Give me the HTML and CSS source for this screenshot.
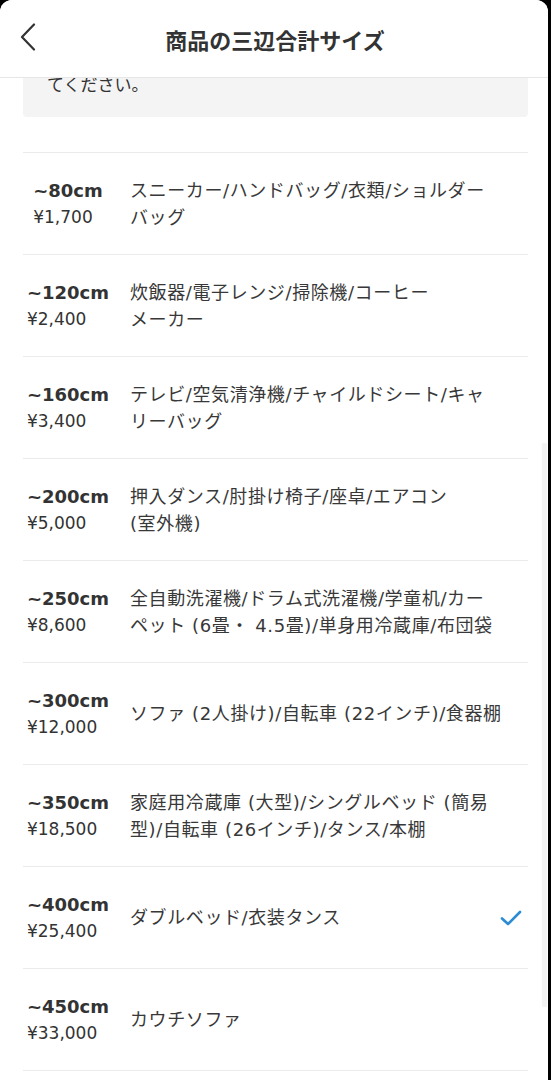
FILE: index.html
```
<!DOCTYPE html>
<html lang="ja">
<head>
<meta charset="UTF-8">
<title>商品の三辺合計サイズ</title>
<link rel="stylesheet" href="styles.css">
</head>
<body>
<div class="sheet">
  <header class="topbar">
    <a class="back" href="#">
      <svg width="16" height="28" viewBox="0 0 16 28"><polyline points="14,1.5 2,14 14,26.5" fill="none" stroke="#333" stroke-width="2.2" stroke-linecap="round" stroke-linejoin="round"/></svg>
    </a>
    <h1>商品の三辺合計サイズ</h1>
  </header>

  <div class="content">
    <div class="note"><p>てください。</p></div>

    <ul class="sizes">
      <li class="size">
        <div class="size-head"><div><b>~80cm</b><span>¥1,700</span></div></div>
        <p class="size-items">スニーカー/ハンドバッグ/衣類/ショルダー<br>バッグ</p>
      </li>
      <li class="size">
        <div class="size-head"><div><b>~120cm</b><span>¥2,400</span></div></div>
        <p class="size-items">炊飯器/電子レンジ/掃除機/コーヒー<br>メーカー</p>
      </li>
      <li class="size">
        <div class="size-head"><div><b>~160cm</b><span>¥3,400</span></div></div>
        <p class="size-items">テレビ/空気清浄機/チャイルドシート/キャ<br>リーバッグ</p>
      </li>
      <li class="size">
        <div class="size-head"><div><b>~200cm</b><span>¥5,000</span></div></div>
        <p class="size-items">押入ダンス/肘掛け椅子/座卓/エアコン<br>(室外機)</p>
      </li>
      <li class="size">
        <div class="size-head"><div><b>~250cm</b><span>¥8,600</span></div></div>
        <p class="size-items">全自動洗濯機/ドラム式洗濯機/学童机/カー<br>ペット (6畳・ 4.5畳)/単身用冷蔵庫/布団袋</p>
      </li>
      <li class="size">
        <div class="size-head"><div><b>~300cm</b><span>¥12,000</span></div></div>
        <p class="size-items">ソファ (2人掛け)/自転車 (22インチ)/食器棚</p>
      </li>
      <li class="size">
        <div class="size-head"><div><b>~350cm</b><span>¥18,500</span></div></div>
        <p class="size-items">家庭用冷蔵庫 (大型)/シングルベッド (簡易<br>型)/自転車 (26インチ)/タンス/本棚</p>
      </li>
      <li class="size selected">
        <div class="size-head"><div><b>~400cm</b><span>¥25,400</span></div></div>
        <p class="size-items">ダブルベッド/衣装タンス</p>
        <svg class="check" width="22" height="18" viewBox="0 0 22 18"><polyline points="2,9.5 8,15 20,3" fill="none" stroke="#2b8bd4" stroke-width="2.6" stroke-linecap="round" stroke-linejoin="round"/></svg>
      </li>
      <li class="size">
        <div class="size-head"><div><b>~450cm</b><span>¥33,000</span></div></div>
        <p class="size-items">カウチソファ</p>
      </li>
    </ul>
  </div>

  <div class="scroll-thumb"></div>
</div>
</body>
</html>
```

FILE: styles.css
```
html, body {margin:0; padding:0; background:#000; height:100%; overflow:hidden;}
body {font-family:"DejaVu Sans", "Noto Sans CJK JP", sans-serif; color:#333;}

.sheet {position:relative; width:548px; height:1080px; background:#fff; border-radius:12px 12px 0 0; overflow:hidden;}

.topbar {position:relative; z-index:2; height:77px; background:#fff; border-bottom:1px solid #e6e6e6; display:flex; align-items:center; justify-content:center;}
.topbar h1 {margin:0 0 0 2px; font-family:"Noto Sans CJK JP", sans-serif; font-size:22px; font-weight:bold; color:#333;}
.back {position:absolute; left:20px; top:23px; display:block; width:16px; height:28px;}
.back svg {display:block;}

.content {padding:0 20px 0 23px;}

.note {margin-top:-6px; background:#f4f4f4; border-radius:0 0 4px 4px; padding:0 24px 21px;}
.note p {margin:0; font-family:"Noto Sans CJK JP", sans-serif; font-size:17px; line-height:24px; color:#333;}

.sizes {list-style:none; margin:35px 0 0; padding:0; border-top:1px solid #ebebeb;}
.size {display:flex; align-items:center; height:101px; border-bottom:1px solid #ebebeb; padding-right:6px;}
.size-head {width:90px; flex:none; display:flex; justify-content:center;}
.size-head b, .size-head span {display:block; line-height:27px;}
.size-head b {font-size:18px; font-weight:bold;}
.size-head span {font-size:17px;}
.size-items {margin:0 0 0 17px; font-size:18px; line-height:27px; letter-spacing:0.6px; color:#383838; white-space:nowrap;}
.check {margin-left:auto; flex:none;}

.scroll-thumb {position:absolute; left:542px; top:443px; width:5px; height:564px; background:#f3f3f3; border-radius:3px; box-shadow:0 0 1px rgba(0,0,0,0.08);}
```
